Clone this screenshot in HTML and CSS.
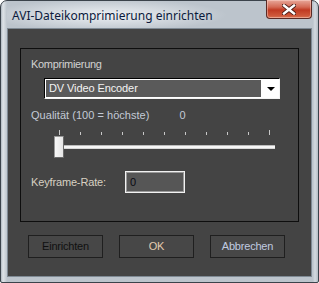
FILE: index.html
```html
<!DOCTYPE html>
<html>
<head>
<meta charset="utf-8">
<link rel="stylesheet" href="styles.css">
</head>
<body>
<div class="window">
  <div class="titlebar">
    <span class="title">AVI-Dateikomprimierung einrichten</span>
    <div class="close" aria-label="Schließen">
      <svg width="14" height="11" viewBox="0 0 14 11">
        <path d="M2 1.5 L12 9.5 M12 1.5 L2 9.5" stroke="#4a1a14" stroke-width="4.2" stroke-linecap="square" fill="none"/>
        <path d="M2 1.5 L12 9.5 M12 1.5 L2 9.5" stroke="#ffffff" stroke-width="2.4" stroke-linecap="square" fill="none"/>
      </svg>
    </div>
  </div>
  <div class="client">
    <div class="group">
      <div class="label first">Komprimierung</div>
      <div class="combo">
        <span class="combo-text">DV Video Encoder</span>
        <span class="combo-btn"><span class="arrow"></span></span>
      </div>
      <div class="quality-row">
        <span class="label blue">Qualität (100 = höchste)</span>
        <span class="label blue value">0</span>
      </div>
      <div class="slider">
        <div class="ticks">
          <i class="tick tall"></i><i class="tick"></i><i class="tick"></i><i class="tick"></i><i class="tick"></i><i class="tick"></i><i class="tick"></i><i class="tick"></i><i class="tick"></i><i class="tick"></i><i class="tick tall"></i>
        </div>
        <div class="track"><div class="thumb"></div></div>
      </div>
      <div class="key-row">
        <span class="label tan">Keyframe-Rate:</span>
        <div class="input">0</div>
      </div>
    </div>
    <div class="buttons">
      <div class="btn btn-setup">Einrichten</div>
      <div class="btn btn-ok">OK</div>
      <div class="btn btn-cancel">Abbrechen</div>
    </div>
  </div>
</div>
</body>
</html>
```

FILE: styles.css
```css
* { box-sizing: border-box; }
html, body { margin: 0; padding: 0; background: #ffffff; }
body { width: 319px; height: 283px; overflow: hidden; font-family: "Liberation Sans", Arial, sans-serif; }

.window {
  width: 319px;
  height: 283px;
  border: 1px solid #3b434b;
  border-radius: 7px 7px 2px 2px;
  padding: 0 6px 5px 6px;
  display: flex;
  flex-direction: column;
  background: linear-gradient(to right, #aeb7c0 0px, #dfe4e8 2px, #bcc4cc 6px, #bcc4cc 312px, #d4dae0 314px, #b4bcc4 317px);
}

.titlebar {
  height: 27px;
  display: flex;
  align-items: center;
  justify-content: space-between;
  background: radial-gradient(ellipse 120px 16px at 100px 14px, rgba(240,243,246,0.95), rgba(240,243,246,0) 100%);
}
.title {
  font-family: "Noto Sans", "Liberation Sans", sans-serif;
  font-size: 12px;
  color: #0b1a3c;
  padding-left: 5px;
  padding-top: 1px;
}
.close {
  align-self: flex-start;
  width: 46px;
  height: 19px;
  margin-top: -1px;
  border: 1px solid #5a2a25;
  border-top: none;
  border-radius: 0 0 4px 4px;
  background: linear-gradient(to bottom, #e8a89a 0px, #d46a55 7px, #c03a22 10px, #cf5a3c 16px, #e08b6a 19px);
  display: flex;
  align-items: center;
  justify-content: center;
  box-shadow: inset 0 0 0 1px rgba(255,220,210,0.45);
}

.client {
  flex: 1;
  border: 1px solid #7f8a94;
  background: #444444;
  padding: 19px 12px 0 12px;
  display: flex;
  flex-direction: column;
}

.group {
  height: 174px;
  border: 1px solid #0e0e0e;
  padding: 9px 0 0 10px;
}

.label {
  font-size: 11px;
  line-height: 13px;
  color: #d2d2d2;
  letter-spacing: -0.3px;
}
.label.blue { color: #c3cad6; letter-spacing: 0.03px; }
.label.tan { color: #d8d0c2; letter-spacing: -0.15px; }

.combo {
  margin: 7px 0 0 13px;
  width: 236px;
  height: 21px;
  border-top: 1px solid #000;
  border-left: 1px solid #000;
  border-right: 1px solid #f4f4f4;
  border-bottom: 1px solid #f4f4f4;
  background: #ffffff;
  padding: 1px 0 1px 1px;
  display: flex;
}
.combo-text {
  flex: 1;
  background: #5a5a5a;
  color: #f2f2f2;
  font-size: 11px;
  line-height: 17px;
  padding-left: 3px;
  letter-spacing: -0.1px;
}
.combo-btn {
  width: 18px;
  background: #ffffff;
  display: flex;
  align-items: center;
  justify-content: center;
}
.arrow {
  width: 0; height: 0;
  border-left: 4px solid transparent;
  border-right: 4px solid transparent;
  border-top: 4px solid #000;
  margin-left: 1px;
}

.quality-row {
  margin-top: 10px;
  display: flex;
}
.value { margin-left: 30px; }

.slider {
  margin: 8px 0 0 23px;
  width: 220px;
}
.ticks {
  margin-left: 5px;
  width: 211px;
  height: 5px;
  display: flex;
  justify-content: space-between;
  align-items: flex-end;
}
.tick { display: block; width: 1px; height: 3px; background: #c8c8c8; }
.tick.tall { height: 5px; }
.track {
  position: relative;
  margin: 10px 0 0 3px;
  width: 218px;
  height: 4px;
  background: #f6f6f6;
  border-top: 1px solid #bcbcbc;
  border-bottom: 1px solid #d8d8d8;
}
.thumb {
  position: absolute;
  left: -3px;
  top: -10px;
  width: 10px;
  height: 22px;
  background: linear-gradient(to right, #f8f8f8, #e6e6e6);
  border: 1px solid #9a9a9a;
  border-right-color: #6a6a6a;
  border-bottom-color: #6a6a6a;
  border-radius: 1px;
}

.key-row {
  margin-top: 22px;
  display: flex;
  align-items: center;
}
.key-row .label { width: 94px; }
.input {
  width: 60px;
  height: 22px;
  border: 1px solid #f2f2f2;
  box-shadow: inset 0 0 0 1px #9a9a9a;
  background: #565656;
  color: #0a0a14;
  font-size: 11px;
  line-height: 20px;
  padding-left: 4px;
}

.buttons {
  display: flex;
  gap: 16px;
  margin: 13px 0 0 8px;
}
.btn {
  width: 75px;
  height: 23px;
  border: 1px solid #1f1f1f;
  background: #474747;
  font-size: 11px;
  line-height: 21px;
  text-align: center;
  letter-spacing: -0.2px;
}
.btn-setup { color: #101010; }
.btn-ok { color: #e4cbb0; }
.btn-cancel { color: #c0cbe0; }
```
